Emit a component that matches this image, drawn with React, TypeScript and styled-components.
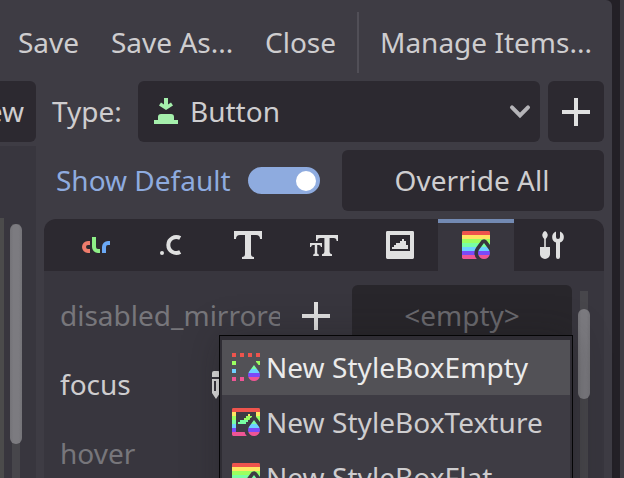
import React from "react";
import styled, { createGlobalStyle } from "styled-components";

const c = {
  base: "#3e3c44",
  dark: "#2c2930",
  content: "#38363e",
  gap: "#232026",
  text: "#cecdcf",
  muted: "#77767b",
  accent: "#8eabdf",
  icon: "#e0e0e0",
  grabber: "#7c7b80",
  track: "#47464b",
};

const GlobalStyle = createGlobalStyle`
  *, *::before, *::after { box-sizing: border-box; }
  body { margin: 0; overflow: hidden; background: ${c.gap}; }
`;

const Screen = styled.div`
  position: relative;
  display: flex;
  gap: 8px;
  width: 624px;
  height: 478px;
  overflow: hidden;
  background: ${c.gap};
  color: ${c.text};
  font: 28px/37px "Noto Sans", sans-serif;
  white-space: nowrap;
`;

const Dock = styled.main`
  display: flex;
  flex-direction: column;
  flex: 0 0 612px;
  min-width: 0;
  background: ${c.base};
  border-top-right-radius: 6px;
`;

const NextDock = styled.div`
  flex: 1;
  background: ${c.base};
`;

const MenuBar = styled.nav`
  display: flex;
  align-items: center;
  flex: 0 0 81px;
  padding: 4px 0 0 18px;
`;

const MenuItem = styled.span<{ $width: number }>`
  flex: 0 0 ${(p) => p.$width}px;
`;

const Separator = styled.i`
  width: 2px;
  height: 61px;
  margin-right: 21px;
  background: #514f57;
`;

const TypeRow = styled.div`
  display: flex;
  flex: 0 0 61px;
`;

const Button = styled.div<{ $width: number; $disabled?: boolean }>`
  display: flex;
  align-items: center;
  justify-content: center;
  flex: 0 0 ${(p) => p.$width}px;
  min-width: 0;
  height: 61px;
  border-radius: 6px;
  background: ${(p) => (p.$disabled ? "#28262b" : c.dark)};
  color: ${(p) => (p.$disabled ? "#6b6a6f" : c.text)};
`;

const OverrideButton = styled(Button)`
  padding-right: 2px;
`;

const PreviewButton = styled(Button)`
  width: 36px;
  justify-content: flex-end;
  padding-right: 12px;
  border-radius: 0 6px 6px 0;
`;

const TypeLabel = styled.span`
  flex: 0 0 102px;
  padding-left: 16px;
  line-height: 61px;
`;

const Dropdown = styled(Button)`
  justify-content: flex-start;
  gap: 8px;
  margin-right: 8px;
  padding: 0 4px 0 12px;
`;

const DropdownValue = styled.span`
  flex: 1;
`;

const Body = styled.div`
  display: flex;
  gap: 8px;
  flex: 1;
  min-height: 0;
  padding-top: 4px;
`;

const PreviewPane = styled.div`
  display: flex;
  gap: 6px;
  flex: 0 0 36px;
  padding-top: 72px;
  background: ${c.content};
`;

const PreviewCanvas = styled.div`
  width: 4px;
  background: #4b4b4b;
`;

const Track = styled.div<{ $top: number; $lead: number; $size: number }>`
  display: flex;
  flex-direction: column;
  align-items: center;
  width: 12px;
  margin-top: ${(p) => p.$top}px;
  padding-top: ${(p) => p.$lead}px;
  background: linear-gradient(${c.track}, ${c.track}) center / 8px 100% no-repeat;

  &::before {
    content: "";
    flex: none;
    width: 12px;
    height: ${(p) => p.$size}px;
    border-radius: 6px;
    background: linear-gradient(90deg, #747378, ${c.grabber} 30%, ${c.grabber} 70%, #747378);
  }
`;

const Editor = styled.section`
  display: flex;
  flex-direction: column;
  flex: 0 0 560px;
  padding-top: 4px;
`;

const DefaultsRow = styled.div`
  display: flex;
  align-items: center;
  flex: 0 0 61px;
  margin-bottom: 8px;
  padding-left: 12px;
`;

const DefaultsLabel = styled.span`
  flex: 0 0 192px;
  color: ${c.accent};
`;

const Toggle = styled.div`
  display: flex;
  align-items: center;
  justify-content: flex-end;
  width: 72px;
  height: 27px;
  margin-right: 22px;
  padding-right: 4px;
  border-radius: 14px;
  background: ${c.accent};

  &::after {
    content: "";
    width: 20px;
    height: 20px;
    border-radius: 50%;
    background: #fff;
  }
`;

const Tabs = styled.div`
  display: flex;
  flex: 0 0 52px;
  padding-left: 14px;
  border-radius: 12px 12px 0 0;
  background: ${c.dark};
`;

const Tab = styled.div<{ $active?: boolean }>`
  display: grid;
  place-items: center;
  width: 76px;
  background: ${(p) => (p.$active ? c.content : "transparent")};
  box-shadow: ${(p) => (p.$active ? "inset 0 4px #738ab3" : "none")};
`;

const Content = styled.div`
  display: flex;
  gap: 6px;
  flex: 1;
  min-height: 0;
  padding: 14px 0 0 16px;
  background: ${c.content};
`;

const Items = styled.div`
  display: flex;
  flex-direction: column;
  gap: 8px;
  flex: 0 0 512px;
`;

const ItemRow = styled.div`
  display: flex;
  align-items: center;
  flex: 0 0 61px;
`;

const ItemName = styled.span<{ $muted?: boolean }>`
  flex: 0 0 220px;
  overflow: hidden;
  color: ${(p) => (p.$muted ? c.muted : c.text)};
`;

const AddSlot = styled.span`
  display: grid;
  place-items: center;
  flex: 0 0 72px;
`;

const EditSlot = styled.span`
  display: flex;
  margin-left: -80px;
`;

const Menu = styled.div`
  position: absolute;
  left: 219px;
  top: 335px;
  width: 354px;
  height: 180px;
  padding: 4px 2px 0;
  border: 1px solid #050506;
  background: #2f2d34;
  box-shadow: 0 0 36px rgba(24, 24, 24, 0.32);
`;

const MenuRow = styled.div<{ $hover?: boolean }>`
  display: flex;
  align-items: center;
  gap: 4px;
  height: 55px;
  padding: 0 0 1px 8px;
  letter-spacing: 0.05px;
  background: ${(p) => (p.$hover ? "#525156" : c.base)};
  color: ${(p) => (p.$hover ? "#ebebeb" : c.text)};
`;

const Glyph = styled.svg`
  display: block;
  flex: none;
  width: 32px;
  height: 32px;
  fill: ${c.icon};
`;

const Icon = ({ children }: { children: React.ReactNode }) => (
  <Glyph viewBox="0 0 16 16">{children}</Glyph>
);

const PlusIcon = () => (
  <Icon><path d="M7 1h2v6h6v2H9v6H7V9H1V7h6z" /></Icon>
);

const ButtonIcon = () => (
  <Icon>
    <path fill="#a5efac" d="M7 1h2v3.2l1.500-1 1 1.500L8 7 4.500 4.700l1-1.500 1.500 1zM2 12h2v-1.500Q4 9 5.500 9h5Q12 9 12 10.500V12h2v2H2z" />
  </Icon>
);

const ChevronIcon = () => (
  <Icon><path d="m4 5.700 4 4 4-4" fill="none" stroke="#b5b4b8" strokeWidth="2" strokeLinecap="round" /></Icon>
);

const ColorIcon = () => (
  <Icon>
    <path fill="#ef7c6c" d="M4 6a3 3 0 0 0 0 6h1v-2H4a1 1 0 0 1 0-2h1V6z" />
    <path fill="#8eef87" d="M6 4v5a3 3 0 0 0 3 3h1v-2H9a1 1 0 0 1-1-1V4z" />
    <path fill="#6ba9f6" d="M14 6a3 3 0 0 0-3 3v3h2V9a1 1 0 0 1 1-1h1V6z" />
  </Icon>
);

const ConstantIcon = () => (
  <Icon>
    <circle cx="3" cy="12" r="1" />
    <path d="M12.100 4.500A4 4 0 1 0 12.100 11.500" fill="none" stroke={c.icon} strokeWidth="2" />
  </Icon>
);

const FontIcon = () => (
  <Icon><path d="M1 1v4h1a2 2 0 0 1 2-2h2.500v9.500A1.500 1.500 0 0 1 5 14v1h6v-1a1.500 1.500 0 0 1-1.500-1.500V3H12a2 2 0 0 1 2 2h1V1z" /></Icon>
);

const FontSizeIcon = () => (
  <Icon>
    <path d="M4 3v3h.7A1.500 1.500 0 0 1 6.200 4.500h2v7q0 1-1.200 1.100v.9h5v-.9q-1.200-.1-1.200-1.100v-7h2A1.500 1.500 0 0 1 14.300 6h.7V3z" />
    <path d="M1 7v2h.5q.2-1 1-1h.9v4q0 .7-.8.800v.7h2.800v-.7q-.8-.1-.8-.8V8h.9q.8 0 1 1H7V7z" />
  </Icon>
);

const ImageIcon = () => (
  <Icon>
    <path fillRule="evenodd" d="M1.700 1h12.600q.7 0 .7.700v12.600q0 .7-.7.700H1.700q-.7 0-.7-.7V1.700Q1 1 1.700 1zM3 3v8h10V3zm1 7V9h1V8h1V7h2V6h1V5h1v1h1v2h1v2z" />
  </Icon>
);

const ToolsIcon = () => (
  <Icon>
    <path d="M4.500 1q1 .2 1.400 2-.2 1.400-1 2v4H7v3.500a2.500 2.500 0 0 1-5 0V9h2.100V5q-.9-.7-1-2Q3.500 1.200 4.500 1zM10 1.200V4a1 1 0 0 0 2 0V1.200A3 3 0 0 1 12 6.800V14a1 1 0 0 1-2 0V6.800A3 3 0 0 1 10 1.200z" />
  </Icon>
);

const PencilIcon = () => (
  <Icon>
    <path fillRule="evenodd" d="M7 1h2a1 1 0 0 1 1 1v2H6V2a1 1 0 0 1 1-1zM6 5h4v7l-2 3-2-3zm1 1v5h1V6z" />
  </Icon>
);

const stripes = ["#ee544d", "#ffe562", "#9bff60", "#78ffa3", "#6dd1ff", "#7b4af8", "#ee5595"];
const drop = "M12 7 9.600 10.200a3 3 0 1 0 4.800 0z";

/* The style box family shares rainbow stripes and a droplet in the corner. */
const StyleBoxIcon = ({ id, shape }: { id: string; shape: string }) => (
  <Icon>
    <defs>
      <mask id={`${id}-mask`}>
        <path d={shape} fill="#fff" fillRule="evenodd" />
        <path d={drop} fill="#000" stroke="#000" strokeWidth="3.600" strokeLinejoin="round" />
        <path d={drop} fill="#fff" />
      </mask>
    </defs>
    <g mask={`url(#${id}-mask)`}>
      {stripes.map((fill, i) => (
        <rect key={fill} x="1" y={1 + i * 2} width="14" height="2" fill={fill} />
      ))}
    </g>
  </Icon>
);

const FLAT = "M1.700 1h12.600q.7 0 .7.700v12.600q0 .7-.7.700H1.700q-.7 0-.7-.7V1.700Q1 1 1.700 1z";
const TEXTURE = FLAT + "M3 3v10h10V3zM4 9V8h1V7h2V6h1V5h1V4h1v1h1v1h-1v1H9v1H8v1z";
const EMPTY =
  "M1 1h2v2H1zM5 1h2v2H5zM9 1h2v2H9zM13 1h2v2h-2zM1 5h2v2H1zM13 5h2v2h-2zM1 9h2v2H1zM1 13h2v2H1zM5 13h2v2H5z";

const menuItems = [
  { label: "New StyleBoxEmpty", id: "empty", shape: EMPTY },
  { label: "New StyleBoxTexture", id: "texture", shape: TEXTURE },
  { label: "New StyleBoxFlat", id: "flat", shape: FLAT },
];

export default function App() {
  return (
    <>
      <GlobalStyle />
      <Screen>
        <Dock>
          <MenuBar>
            <MenuItem $width={93}>Save</MenuItem>
            <MenuItem $width={154}>Save As...</MenuItem>
            <MenuItem $width={92}>Close</MenuItem>
            <Separator />
            <MenuItem $width={212}>Manage Items...</MenuItem>
          </MenuBar>
          <TypeRow>
            <PreviewButton $width={36}>ew</PreviewButton>
            <TypeLabel>Type:</TypeLabel>
            <Dropdown $width={402}>
              <ButtonIcon />
              <DropdownValue>Button</DropdownValue>
              <ChevronIcon />
            </Dropdown>
            <Button $width={56}><PlusIcon /></Button>
          </TypeRow>
          <Body>
            <PreviewPane>
              <PreviewCanvas />
              <Track $top={6} $lead={0} $size={220} />
            </PreviewPane>
            <Editor>
              <DefaultsRow>
                <DefaultsLabel>Show Default</DefaultsLabel>
                <Toggle />
                <OverrideButton $width={262}>Override All</OverrideButton>
              </DefaultsRow>
              <Tabs>
                <Tab><ColorIcon /></Tab>
                <Tab><ConstantIcon /></Tab>
                <Tab><FontIcon /></Tab>
                <Tab><FontSizeIcon /></Tab>
                <Tab><ImageIcon /></Tab>
                <Tab $active><StyleBoxIcon id="tab" shape={FLAT} /></Tab>
                <Tab><ToolsIcon /></Tab>
              </Tabs>
              <Content>
                <Items>
                  <ItemRow>
                    <ItemName $muted>disabled_mirrore</ItemName>
                    <AddSlot><PlusIcon /></AddSlot>
                    <Button $width={220} $disabled>&lt;empty&gt;</Button>
                  </ItemRow>
                  <ItemRow>
                    <ItemName>focus</ItemName>
                    <EditSlot><PencilIcon /></EditSlot>
                  </ItemRow>
                  <ItemRow>
                    <ItemName $muted>hover</ItemName>
                  </ItemRow>
                </Items>
                <Track $top={6} $lead={18} $size={90} />
              </Content>
            </Editor>
          </Body>
        </Dock>
        <NextDock />
        <Menu>
          {menuItems.map((item, i) => (
            <MenuRow key={item.id} $hover={i === 0}>
              <StyleBoxIcon id={item.id} shape={item.shape} />
              {item.label}
            </MenuRow>
          ))}
        </Menu>
      </Screen>
    </>
  );
}
